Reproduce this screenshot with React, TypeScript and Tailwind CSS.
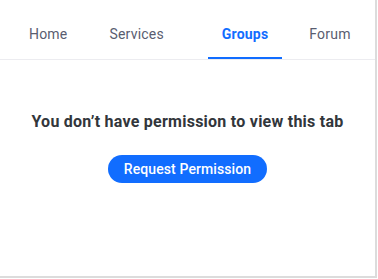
const App = () => {
  return (
    <div className="w-[378px] h-[279px] bg-white" style={{ fontFamily: 'Roboto, "Noto Sans", sans-serif' }}>
      <div className="w-[377px] h-[278px] bg-white border-r-2 border-b-2 border-[#dcdcdc] flex flex-col">
        <div className="h-[60px] border-b border-[#ececf0] flex items-end pl-[15px]">
          <div className="flex h-full">
            <Tab label="Home" />
            <div className="w-[14px]" />
            <Tab label="Services" />
            <div className="w-[30px]" />
            <Tab label="Groups" active />
            <div className="w-[13px]" />
            <Tab label="Forum" />
          </div>
        </div>
        <div className="flex flex-col items-center pt-[52px]">
          <h2 className="text-[16px] font-bold text-[#32363b] leading-[20px] tracking-[0.25px]">
            You don’t have permission to view this tab
          </h2>
          <button className="mt-[23px] h-[28px] px-[16px] rounded-full bg-[#116dff] text-white text-[14px] font-medium tracking-[0.1px]">
            Request Permission
          </button>
        </div>
      </div>
    </div>
  );
};

const Tab = ({ label, active }: { label: string; active?: boolean }) => {
  return (
    <div
      className={`h-full px-[14px] flex items-center pt-[11px] border-b-2 tracking-[0.2px] ${
        active ? 'border-[#116dff] text-[#116dff] font-bold' : 'border-transparent text-[#595d70]'
      } text-[14px]`}
    >
      {label}
    </div>
  );
};

export default App;
